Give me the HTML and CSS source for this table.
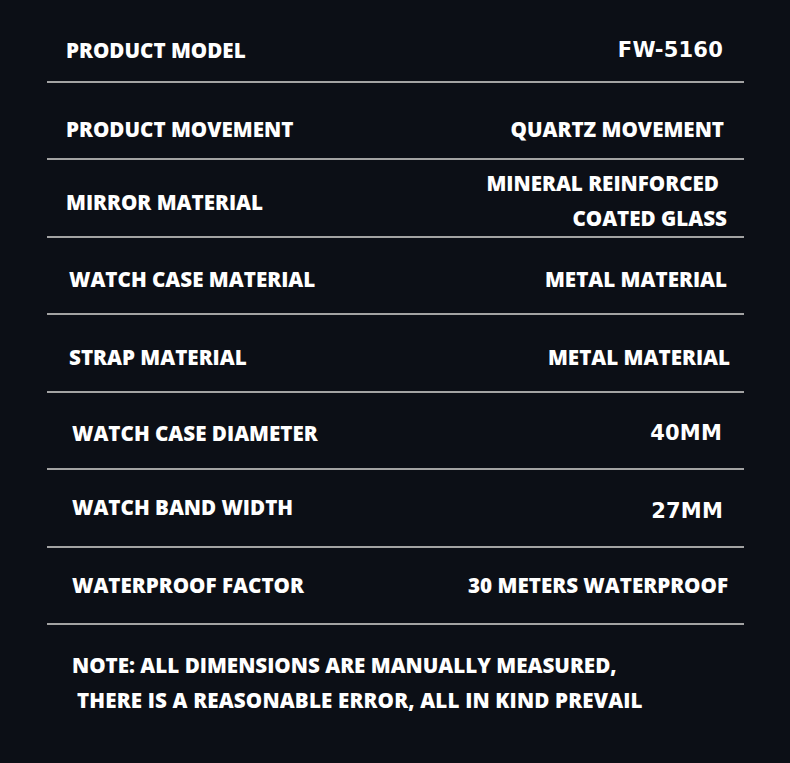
FILE: index.html
```html
<!DOCTYPE html>
<html lang="en">
<head>
<meta charset="utf-8">
<title>Product specifications</title>
<link rel="stylesheet" href="styles.css">
</head>
<body>
<main class="specs">
  <div class="row row--1">
    <span class="label">PRODUCT MODEL</span>
    <span class="value value--tech">FW-5160</span>
  </div>
  <div class="row row--2">
    <span class="label">PRODUCT MOVEMENT</span>
    <span class="value">QUARTZ MOVEMENT</span>
  </div>
  <div class="row row--3">
    <span class="label">MIRROR MATERIAL</span>
    <span class="value value--multi">
      <span class="value-line value-line--first">MINERAL REINFORCED</span>
      <span class="value-line">COATED GLASS</span>
    </span>
  </div>
  <div class="row row--4">
    <span class="label">WATCH CASE MATERIAL</span>
    <span class="value">METAL MATERIAL</span>
  </div>
  <div class="row row--5">
    <span class="label">STRAP MATERIAL</span>
    <span class="value">METAL MATERIAL</span>
  </div>
  <div class="row row--6">
    <span class="label">WATCH CASE DIAMETER</span>
    <span class="value value--tech">40MM</span>
  </div>
  <div class="row row--7">
    <span class="label">WATCH BAND WIDTH</span>
    <span class="value value--tech value--low">27MM</span>
  </div>
  <div class="row row--8">
    <span class="label">WATERPROOF FACTOR</span>
    <span class="value">30 METERS WATERPROOF</span>
  </div>
  <p class="note">
    <span class="note-line">NOTE: ALL DIMENSIONS ARE MANUALLY MEASURED,</span>
    <span class="note-line note-line--indent">THERE IS A REASONABLE ERROR, ALL IN KIND PREVAIL</span>
  </p>
</main>
</body>
</html>
```
FILE: styles.css
```css
html, body {
  margin: 0;
  padding: 0;
  background: #0c0f16;
}

body {
  width: 790px;
  height: 763px;
  overflow: hidden;
  color: #ffffff;
  font-family: "Open Sans", "Noto Sans", sans-serif;
  font-weight: 800;
  font-size: 20.6px;
  letter-spacing: 0;
}

.specs {
  margin-left: 47px;
  width: 697px;
}

.row {
  box-sizing: border-box;
  display: flex;
  justify-content: space-between;
  align-items: flex-start;
  height: var(--h, 77px);
  padding: var(--pt, 30px) var(--pr, 20px) 0 var(--pl, 20px);
  border-bottom: 2px solid #a3a3a3;
  line-height: 24px;
}

.row--1 { --h: 83px; --pt: 38px; --pl: 19px; --pr: 21px; }
.row--2 { --h: 77px; --pt: 34px; --pl: 19px; --pr: 20px; }
.row--3 { --h: 78px; --pt: 30px; --pl: 19px; --pr: 17px; }
.row--4 { --h: 77px; --pt: 29px; --pl: 22px; --pr: 17px; }
.row--5 { --h: 78px; --pt: 30px; --pl: 22px; --pr: 14px; }
.row--6 { --h: 77px; --pt: 28px; --pl: 25px; --pr: 22px; }
.row--7 { --h: 78px; --pt: 25px; --pl: 25px; --pr: 21px; }
.row--8 { --h: 77px; --pt: 25px; --pl: 25px; --pr: 16px; }

.label,
.value {
  white-space: nowrap;
}

.value--tech {
  font-family: "DejaVu Sans", sans-serif;
  font-weight: 700;
  font-size: 21px;
  letter-spacing: 0.2px;
}

.value--low {
  margin-top: 4px;
}

.value--multi {
  display: flex;
  flex-direction: column;
  align-items: flex-end;
  line-height: 35px;
  margin-top: -24px;
}

.value-line--first {
  margin-right: 8px;
}

.note {
  margin: 23px 0 0;
  padding-left: 25px;
  line-height: 35px;
  display: flex;
  flex-direction: column;
  align-items: flex-start;
}

.note-line {
  white-space: nowrap;
}

.note-line--indent {
  padding-left: 5px;
  letter-spacing: 0.15px;
}
```
